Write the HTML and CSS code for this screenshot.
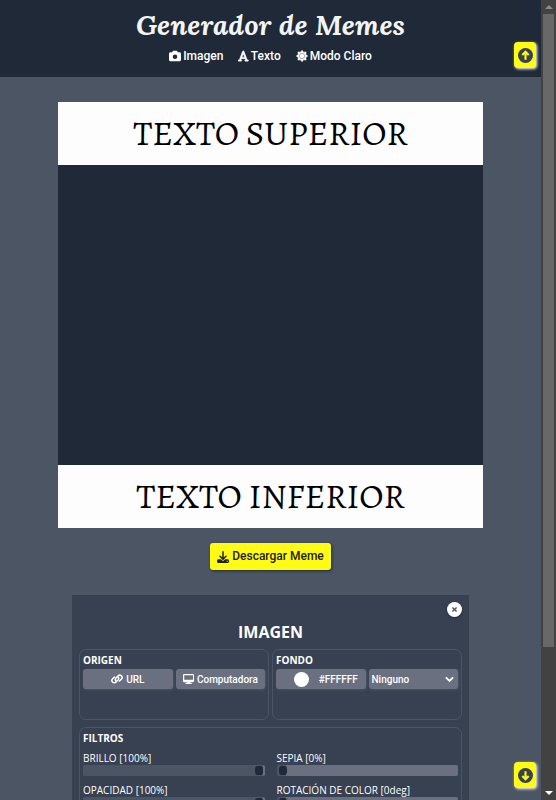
FILE: index.html
```html
<!DOCTYPE html>
<html lang="es">
<head>
<meta charset="utf-8">
<meta name="viewport" content="width=device-width, initial-scale=1">
<title>Generador de Memes</title>
<link rel="stylesheet" href="styles.css">
</head>
<body>
<div class="shell">
  <div class="page">
    <header class="header">
      <h1 class="title">Generador de Memes</h1>
      <nav class="nav">
        <button type="button" class="nav-button">
          <svg class="icon" viewBox="0 0 512 512" aria-hidden="true"><path fill="currentColor" fill-rule="evenodd" d="M149 65l-10 31H64c-35 0-64 29-64 64v256c0 35 29 64 64 64h384c35 0 64-29 64-64V160c0-35-29-64-64-64h-75l-10-31c-7-20-25-33-46-33H195c-21 0-39 13-46 33zM256 192a96 96 0 1 1 0 192 96 96 0 0 1 0-192z"/></svg>
          Imagen</button>
        <button type="button" class="nav-button">
          <svg class="icon" viewBox="0 0 448 512" aria-hidden="true"><path fill="currentColor" stroke="currentColor" stroke-width="20" fill-rule="evenodd" d="M254 53c-5-13-17-21-30-21s-25 8-30 21L58 416H32a32 32 0 0 0 0 64h96a32 32 0 0 0 0-64h-2l18-48h160l18 48h-2a32 32 0 0 0 0 64h96a32 32 0 0 0 0-64h-26zM280 304H168l56-149z"/></svg>
          Texto</button>
        <button type="button" class="nav-button">
          <svg class="icon" viewBox="0 0 512 512" aria-hidden="true"><path fill="currentColor" stroke="currentColor" stroke-width="24" stroke-linejoin="round" d="M256 12l66 84 108-14-14 108 84 66-84 66 14 108-108-14-66 84-66-84-108 14 14-108L12 256l84-66L82 82l108 14z"/><circle cx="256" cy="256" r="112" fill="none" stroke="#6b7280" stroke-width="24"/></svg>
          Modo Claro</button>
      </nav>
    </header>

    <main class="main">
      <section class="meme">
        <h2 class="meme-text">TEXTO SUPERIOR</h2>
        <div class="meme-image"></div>
        <h2 class="meme-text">TEXTO INFERIOR</h2>
      </section>

      <button type="button" class="download">
        <svg class="icon" viewBox="0 0 512 512" aria-hidden="true"><path fill="currentColor" fill-rule="evenodd" d="M288 32a32 32 0 0 0-64 0v243l-73-74a32 32 0 0 0-46 46l128 128c13 12 33 12 46 0l128-128a32 32 0 0 0-46-46l-73 74zM64 352c-35 0-64 29-64 64v32c0 35 29 64 64 64h384c35 0 64-29 64-64v-32c0-35-29-64-64-64H347l-46 45a64 64 0 0 1-90 0l-46-45zm368 56a24 24 0 1 1 0 48 24 24 0 0 1 0-48z"/></svg>
        Descargar Meme</button>

      <form class="panel">
        <button type="button" class="close" aria-label="Cerrar">
          <svg class="close-icon" viewBox="0 0 10 10" aria-hidden="true"><path d="M2 2l6 6M8 2l-6 6" fill="none" stroke="currentColor" stroke-width="2"/></svg>
        </button>
        <h2 class="panel-title">IMAGEN</h2>
        <div class="groups">
          <section class="group">
            <h3 class="group-title">ORIGEN</h3>
            <div class="pair">
              <button type="button" class="control">
                <svg class="icon" viewBox="0 0 24 20" aria-hidden="true"><g fill="none" stroke="currentColor" stroke-width="3" stroke-linecap="round"><path d="M10 14a4.500 4.500 0 0 1 0-6l4-4a4.500 4.500 0 0 1 7 6l-4 4"/><path d="M14 6a4.500 4.500 0 0 1 0 6l-4 4a4.500 4.500 0 0 1-7-6l4-4"/></g></svg>
                URL</button>
              <button type="button" class="control">
                <svg class="icon" viewBox="0 0 576 512" aria-hidden="true"><path fill="currentColor" fill-rule="evenodd" d="M64 0C29 0 0 29 0 64v288c0 35 29 64 64 64h176l-11 32h-69a32 32 0 0 0 0 64h256a32 32 0 0 0 0-64h-69l-11-32h176c35 0 64-29 64-64V64c0-35-29-64-64-64zm0 64h448v224H64z"/></svg>
                Computadora</button>
            </div>
          </section>
          <section class="group">
            <h3 class="group-title">FONDO</h3>
            <div class="pair">
              <label class="control color"><input type="color" class="swatch" value="#ffffff"><span>#FFFFFF</span></label>
              <span class="select-wrap">
                <select class="control select" aria-label="Mezcla"><option>Ninguno</option></select>
                <svg class="chevron" viewBox="0 0 10 8" aria-hidden="true"><path d="M1.500 2L5 5.500 8.500 2" fill="none" stroke="currentColor" stroke-width="2" stroke-linecap="round"/></svg>
              </span>
            </div>
          </section>
          <section class="group filters">
            <h3 class="group-title">FILTROS</h3>
            <div class="sliders">
              <label class="slider">BRILLO [100%]<input type="range" class="range full" min="0" max="100" value="100"></label>
              <label class="slider">SEPIA [0%]<input type="range" class="range" min="0" max="100" value="0"></label>
              <label class="slider">OPACIDAD [100%]<input type="range" class="range full" min="0" max="100" value="100"></label>
              <label class="slider">ROTACIÓN DE COLOR [0deg]<input type="range" class="range" min="0" max="360" value="0"></label>
            </div>
          </section>
        </div>
      </form>
    </main>
  </div>
  <div class="scrollbar" aria-hidden="true">
    <span class="arrow up"></span>
    <span class="track"><span class="thumb"></span></span>
    <span class="arrow down"></span>
  </div>
</div>

<button type="button" class="jump jump-top" aria-label="Subir">
  <svg class="jump-icon" viewBox="0 0 14 14" aria-hidden="true"><circle cx="7" cy="7" r="7" fill="currentColor"/><path d="M7 11V4M4 6.500l3-3 3 3" fill="none" stroke="#fffb14" stroke-width="2"/></svg>
</button>
<button type="button" class="jump jump-bottom" aria-label="Bajar">
  <svg class="jump-icon" viewBox="0 0 14 14" aria-hidden="true"><circle cx="7" cy="7" r="7" fill="currentColor"/><path d="M7 3v7M4 7.500l3 3 3-3" fill="none" stroke="#fffb14" stroke-width="2"/></svg>
</button>
</body>
</html>
```
FILE: styles.css
```css
* {
  box-sizing: border-box;
  margin: 0;
}

body {
  background: #4b5563;
  color: #fff;
  font-family: "Open Sans", "Noto Sans", sans-serif;
}

button,
select {
  border: 0;
  padding: 0;
  font-family: Roboto, sans-serif;
  font-weight: 500;
  color: inherit;
}

.shell {
  display: grid;
  grid-template-columns: 1fr 15px;
  height: 100vh;
  overflow: hidden;
}

.page {
  min-width: 0;
  overflow: hidden;
}

.header {
  background: #1f2937;
  padding: 5px 0 13px;
  text-align: center;
}

.title {
  font-family: Lora, "Liberation Serif", serif;
  font-size: 28px;
  line-height: 40px;
  font-style: italic;
  font-weight: 700;
  color: #f3f4f6;
}

.nav {
  display: flex;
  justify-content: center;
  gap: 15px;
  padding-top: 3px;
}

.nav-button {
  display: flex;
  align-items: center;
  gap: 2px;
  background: none;
  font-size: 12px;
  line-height: 16px;
}

.icon {
  height: 1em;
  flex: none;
}

.main {
  display: flex;
  flex-direction: column;
  align-items: center;
  padding: 25px 58px 0;
}

.meme {
  width: 100%;
  background: #1f2937;
}

.meme-text {
  background: #fdfdfd;
  color: #000;
  font-family: Alegreya, "Liberation Serif", serif;
  font-size: 35px;
  line-height: 63px;
  font-weight: 400;
  text-align: center;
}

.meme-image {
  height: 300px;
}

.download {
  display: flex;
  align-items: center;
  gap: 3px;
  margin: 15px 0 25px;
  padding: 6px 7px;
  border-radius: 3px;
  background: #fffb14;
  box-shadow: 1px 1px 3px #1f2937;
  color: #1f2010;
  font-size: 12px;
  line-height: 15px;
}

.panel {
  position: relative;
  width: calc(100% - 28px);
  padding: 25px 7px;
  background: #374151;
}

.close {
  position: absolute;
  top: 7px;
  right: 7px;
  display: flex;
  align-items: center;
  justify-content: center;
  width: 15px;
  height: 15px;
  border-radius: 50%;
  background: #fff;
  box-shadow: 0 1px 2px #1f2937;
  color: #4b5563;
}

.close-icon {
  width: 7px;
}

.panel-title {
  margin-bottom: 5px;
  font-size: 16px;
  line-height: 24px;
  font-weight: 700;
  text-align: center;
}

.groups {
  display: grid;
  grid-template-columns: 1fr 1fr;
  gap: 7px 3px;
}

.group {
  min-width: 0;
  min-height: 71px;
  padding: 3px;
  border: 1px solid #4b5563;
  border-radius: 7px;
}

.group-title {
  font-size: 10px;
  line-height: 14px;
  font-weight: 700;
}

.pair {
  display: grid;
  grid-template-columns: 1fr 1fr;
  gap: 3px;
  padding-top: 2px;
}

.control {
  display: flex;
  align-items: center;
  justify-content: center;
  gap: 3px;
  width: 100%;
  height: 20px;
  border-radius: 3px;
  background: #6b7080;
  box-shadow: 1px 1px 3px #4b5563;
  font-family: Roboto, sans-serif;
  font-size: 10px;
  font-weight: 500;
}

.color {
  gap: 10px;
  padding-left: 10px;
}

.swatch {
  appearance: none;
  width: 15px;
  height: 15px;
  padding: 0;
  border: 0;
  border-radius: 50%;
  background: none;
  overflow: hidden;
}

.swatch::-webkit-color-swatch-wrapper {
  padding: 0;
}

.swatch::-webkit-color-swatch {
  border: 0;
}

.select-wrap {
  position: relative;
}

.select {
  appearance: none;
  padding: 0 16px 0 3px;
}

.chevron {
  position: absolute;
  top: 7px;
  right: 4px;
  width: 9px;
  pointer-events: none;
}

.filters {
  grid-column: 1 / -1;
}

.sliders {
  display: grid;
  grid-template-columns: 1fr 1fr;
  gap: 7px 12px;
  padding-top: 6px;
}

.slider {
  display: flex;
  flex-direction: column;
  font-size: 10px;
  line-height: 14px;
}

.range {
  appearance: none;
  width: 100%;
  height: 11px;
  margin: 0;
  border-radius: 2px;
  background: linear-gradient(to right, #4b5563 9px, #6b7080 9px);
}

.range.full {
  background: linear-gradient(to left, #6b7080 2px, #4b5563 2px);
}

.range::-webkit-slider-thumb {
  appearance: none;
  width: 12px;
  height: 9px;
  border: 0 solid transparent;
  border-width: 0 2px;
  border-radius: 4px;
  background: #1f2937;
  background-clip: padding-box;
}

.scrollbar {
  display: flex;
  flex-direction: column;
  align-items: center;
  background: #424242;
}

.arrow {
  display: flex;
  align-items: center;
  height: 14px;
}

.arrow::before {
  content: "";
  border: 4px solid transparent;
}

.up::before {
  border-top: 0;
  border-bottom-color: #8b8b8b;
}

.down::before {
  border-bottom: 0;
  border-top-color: #fff;
}

.track {
  flex: 1;
  width: 11px;
}

.thumb {
  display: block;
  height: 82%;
  background: #686868;
}

.jump {
  position: fixed;
  right: 20px;
  display: flex;
  align-items: center;
  justify-content: center;
  width: 22px;
  height: 26px;
  border-radius: 4px;
  background: #fffb14;
  box-shadow: 1px 1px 3px #fff;
  color: #374151;
}

.jump-top {
  top: 42px;
}

.jump-bottom {
  bottom: 12px;
}

.jump-icon {
  width: 15px;
}
```
